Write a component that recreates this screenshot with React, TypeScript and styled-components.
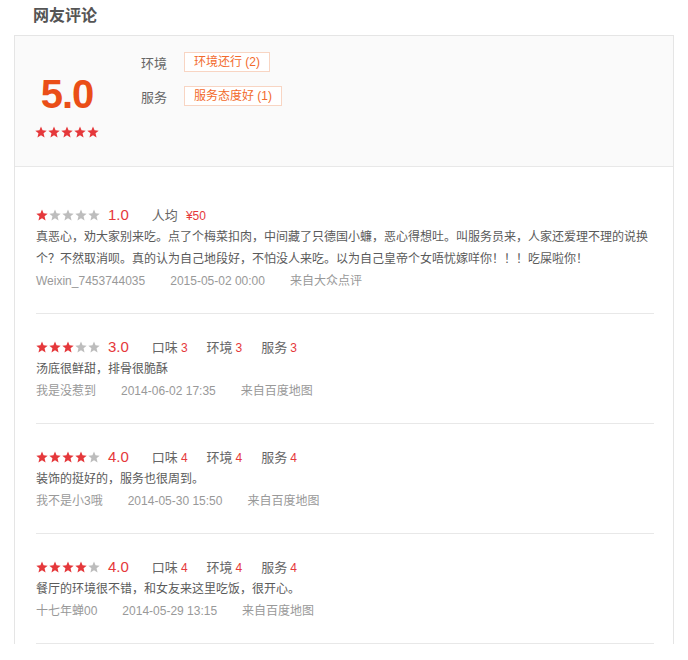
import React from 'react';
import styled, { createGlobalStyle } from 'styled-components';

const GlobalStyle = createGlobalStyle`
    body {
        margin: 0;
        background: #fff;
        font-family: "Liberation Sans", "Noto Sans CJK SC", sans-serif;
        color: #666;
    }
`

const REVIEWS = [
    {
        stars: 1,
        extra: [{ label: '人均', value: '¥50' }],
        text: '真恶心，劝大家别来吃。点了个梅菜扣肉，中间藏了只德国小蠊，恶心得想吐。叫服务员来，人家还爱理不理的说换个？不然取消呗。真的认为自己地段好，不怕没人来吃。以为自己皇帝个女唔忧嫁咩你！！！吃屎啦你！',
        user: 'Weixin_7453744035',
        time: '2015-05-02 00:00',
        source: '来自大众点评',
    },
    {
        stars: 3,
        extra: [
            { label: '口味', value: '3' },
            { label: '环境', value: '3' },
            { label: '服务', value: '3' },
        ],
        text: '汤底很鲜甜，排骨很脆酥',
        user: '我是没惹到',
        time: '2014-06-02 17:35',
        source: '来自百度地图',
    },
    {
        stars: 4,
        extra: [
            { label: '口味', value: '4' },
            { label: '环境', value: '4' },
            { label: '服务', value: '4' },
        ],
        text: '装饰的挺好的，服务也很周到。',
        user: '我不是小3哦',
        time: '2014-05-30 15:50',
        source: '来自百度地图',
    },
    {
        stars: 4,
        extra: [
            { label: '口味', value: '4' },
            { label: '环境', value: '4' },
            { label: '服务', value: '4' },
        ],
        text: '餐厅的环境很不错，和女友来这里吃饭，很开心。',
        user: '十七年蝉00',
        time: '2014-05-29 13:15',
        source: '来自百度地图',
    },
]

const TAGS = [
    { label: '环境', tag: '环境还行 (2)' },
    { label: '服务', tag: '服务态度好 (1)' },
]

const Page = styled.div`
    padding: 0 0 20px 14px;
    width: 660px;
`

const Title = styled.h2`
    margin: 0;
    padding: 5px 0 0 19px;
    height: 30px;
    font-size: 16px;
    line-height: 22px;
    font-weight: bold;
    color: #555;
`

const Panel = styled.div`
    border: 1px solid #e5e5e5;
    border-bottom: none;
`

const Summary = styled.div`
    display: flex;
    height: 130px;
    background: #fafafa;
    border-bottom: 1px solid #e8e8e8;
    padding-left: 20px;
`

const ScoreBox = styled.div`
    display: flex;
    flex-direction: column;
    align-items: center;
    width: 64px;
    padding-top: 34px;
`

const BigScore = styled.div`
    font-size: 40px;
    line-height: 48px;
    font-weight: bold;
    letter-spacing: -1px;
    color: #ea4e17;
`

const StarRow = styled.div<{ $mt?: number }>`
    display: flex;
    gap: 1px;
    margin-top: ${p => p.$mt ?? 0}px;
`

const TagList = styled.div`
    display: flex;
    flex-direction: column;
    gap: 14px;
    padding: 16px 0 0 42px;
`

const TagRow = styled.div`
    display: flex;
    align-items: center;
    height: 20px;
`

const TagLabel = styled.span`
    width: 43px;
    font-size: 13px;
    color: #666;
`

const Tag = styled.span`
    display: inline-block;
    height: 18px;
    line-height: 18px;
    padding: 0 9px;
    border: 1px solid #f8d5c3;
    font-size: 12px;
    color: #f26a2b;
    background: #fff;
`

const ReviewList = styled.div`
    padding: 15px 19px 0 21px;
`

const Review = styled.div`
    padding: 21px 0 21px;
    border-bottom: 1px solid #e8e8e8;
`

const HeadRow = styled.div`
    display: flex;
    align-items: center;
    height: 23px;
`

const Score = styled.span`
    margin: 0 23px 0 8px;
    font-size: 15px;
    color: #e5383b;
`

const Item = styled.span`
    margin-right: 19px;
    font-size: 13px;
    color: #666;
`

const ItemValue = styled.span<{ $wide?: boolean }>`
    margin-left: ${p => (p.$wide ? 8 : 3)}px;
    font-size: 12px;
    color: #e5383b;
`

const Text = styled.p`
    margin: 0;
    font-size: 12px;
    line-height: 22px;
    color: #5a5a5a;
`

const Meta = styled.div`
    display: flex;
    font-size: 12px;
    line-height: 22px;
    color: #999;
`

const MetaItem = styled.span`
    margin-right: 25px;
`

const Star = ({ on }: { on: boolean }) => (
    <svg width="12" height="12" viewBox="0 0 24 24">
        <polygon
            points="12,1 15.1,8.6 23.4,9.3 17.1,14.7 19.1,22.8 12,18.4 4.9,22.8 6.9,14.7 0.6,9.3 8.9,8.6"
            fill={on ? '#e5383b' : '#bdbdbd'}
        />
    </svg>
)

const Stars = ({ count, mt }: { count: number; mt?: number }) => (
    <StarRow $mt={mt}>
        {[0, 1, 2, 3, 4].map(i => <Star key={i} on={i < count} />)}
    </StarRow>
)

const App = () => (
    <Page>
        <GlobalStyle />
        <Title>网友评论</Title>
        <Panel>
            <Summary>
                <ScoreBox>
                    <BigScore>5.0</BigScore>
                    <Stars count={5} mt={8} />
                </ScoreBox>
                <TagList>
                    {TAGS.map(t => (
                        <TagRow key={t.label}>
                            <TagLabel>{t.label}</TagLabel>
                            <Tag>{t.tag}</Tag>
                        </TagRow>
                    ))}
                </TagList>
            </Summary>
            <ReviewList>
                {REVIEWS.map((r, idx) => (
                    <Review key={idx}>
                        <HeadRow>
                            <Stars count={r.stars} />
                            <Score>{r.stars.toFixed(1)}</Score>
                            {r.extra.map(e => (
                                <Item key={e.label}>
                                    {e.label}
                                    <ItemValue $wide={e.label === '人均'}>{e.value}</ItemValue>
                                </Item>
                            ))}
                        </HeadRow>
                        <Text>{r.text}</Text>
                        <Meta>
                            <MetaItem>{r.user}</MetaItem>
                            <MetaItem>{r.time}</MetaItem>
                            <MetaItem>{r.source}</MetaItem>
                        </Meta>
                    </Review>
                ))}
            </ReviewList>
        </Panel>
    </Page>
)

export default App
